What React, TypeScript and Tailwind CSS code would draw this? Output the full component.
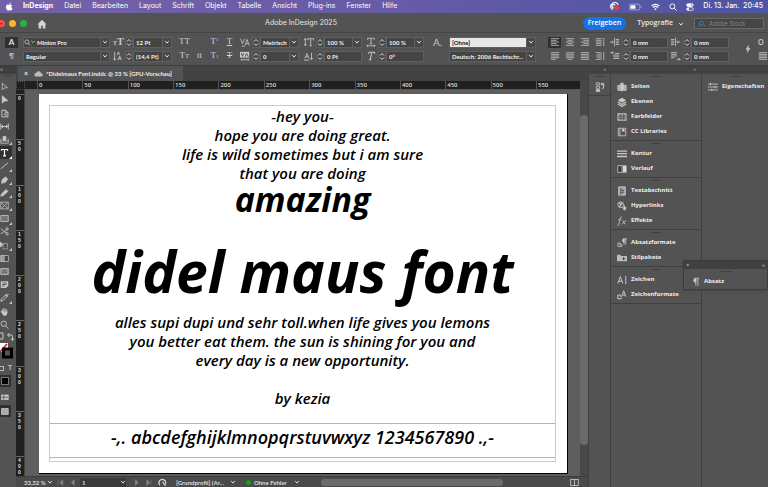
import type { ReactNode } from 'react'

type IconProps = { children: ReactNode; className?: string; box?: string }

function Svg({ children, className = 'size-[10px]', box = '0 0 12 12' }: IconProps) {
  return (
    <svg viewBox={box} className={`${className} shrink-0`} fill="none" stroke="currentColor" strokeWidth="1" aria-hidden="true">
      {children}
    </svg>
  )
}

function Chevron() {
  return (
    <Svg className="size-[6px]" box="0 0 8 8">
      <path d="M1.500 2.500 4 5.500l2.500-3" strokeWidth="1.300" />
    </Svg>
  )
}

function Spinner({ label }: { label: string }) {
  return (
    <button type="button" aria-label={label} className="flex h-[11px] w-2 shrink-0 items-center justify-center border border-[#5d5d5d] bg-[#484848]">
      <Svg className="h-[9px] w-[6px]" box="0 0 6 9">
        <path d="M1 3.500 3 1.500l2 2M1 5.500l2 2 2-2" />
      </Svg>
    </button>
  )
}

type FieldProps = { label: string; value: string; icon?: ReactNode; drop?: boolean; width?: string; light?: boolean }

function Field({ label, value, icon, drop, width = 'w-[38px]', light }: FieldProps) {
  return (
    <div className={`flex h-[11px] shrink-0 border border-[#5f5f5f] ${width} ${light ? 'bg-[#e8e8e8] text-[#222]' : 'bg-[#444] text-[#f0f0f0]'}`}>
      {icon}
      {drop ? (
        <>
          <select aria-label={label} className="min-w-0 flex-1 appearance-none bg-transparent pl-[2px] leading-[9px] outline-none">
            <option>{value}</option>
          </select>
          <span className="pointer-events-none flex w-[9px] items-center justify-center border-l border-[#5f5f5f] bg-[#484848] text-[#ddd]">
            <Chevron />
          </span>
        </>
      ) : (
        <input aria-label={label} defaultValue={value} className="w-full min-w-0 bg-transparent pl-[2px] leading-[9px] outline-none" />
      )}
    </div>
  )
}

type ValueProps = FieldProps & { glyph: ReactNode }

function ValueRow({ glyph, ...field }: ValueProps) {
  return (
    <div className="flex h-[11px] items-center">
      <span className="flex w-3 shrink-0 items-center text-[#c8c8c8]">{glyph}</span>
      <Spinner label={`${field.label} ändern`} />
      <Field {...field} />
    </div>
  )
}

function GlyphButton({ label, children }: { label: string; children: ReactNode }) {
  return (
    <button type="button" aria-label={label} className="flex h-[11px] w-[15px] items-center justify-center font-['Liberation_Serif',serif] text-[9px] font-normal text-[#d0d0d0]">
      {children}
    </button>
  )
}

const lineSets: Record<string, string> = {
  left: 'M1 2h10M1 4h7M1 6h10M1 8h7M1 10h10',
  center: 'M1 2h10M3 4h6M1 6h10M3 8h6M1 10h10',
  right: 'M1 2h10M4 4h7M1 6h10M4 8h7M1 10h10',
  spine: 'M1 2h7M1 4h7M1 6h7M1 8h7M1 10h7M10.500 1v10',
  justLeft: 'M1 2h10M1 4h10M1 6h10M1 8h10M1 10h6',
  justCenter: 'M1 2h10M1 4h10M1 6h10M1 8h10M3 10h6',
  justAll: 'M1 2h10M1 4h10M1 6h10M1 8h10M1 10h10',
  awaySpine: 'M1 2h7M3 4h5M1 6h7M3 8h5M1 10h7M10.500 1v10',
}

function Lines({ d }: { d: string }) {
  return <Svg className="size-[10px]"><path d={d} strokeWidth="1" /></Svg>
}

const menus = ['Datei', 'Bearbeiten', 'Layout', 'Schrift', 'Objekt', 'Tabelle', 'Ansicht', 'Plug-ins', 'Fenster', 'Hilfe']

function MenuBar() {
  return (
    <header className="flex h-[13px] items-center bg-linear-to-r from-[#7462a8] via-[#675ba6] to-[#4c55a4] pr-[5px] pl-[5px] font-[Inter,sans-serif] text-[7px] text-white">
      <Svg className="size-[9px]" box="0 0 24 24">
        <path fill="currentColor" stroke="none" d="M17 12.700c0-2.700 2.200-4 2.300-4.100-1.300-1.800-3.200-2.100-3.900-2.100-1.600-.2-3.200 1-4 1s-2.100-1-3.500-.9c-1.800 0-3.400 1-4.400 2.600-1.900 3.200-.5 8 1.300 10.700.9 1.300 2 2.700 3.400 2.700s1.900-.9 3.500-.9 2.100.9 3.500.8c1.500 0 2.400-1.300 3.300-2.600 1-1.500 1.500-2.900 1.500-3-.1 0-3-1.100-3-4.200zM14.400 4.800c.7-.9 1.200-2.100 1.100-3.300-1.100 0-2.300.7-3.100 1.600-.7.8-1.300 2-1.100 3.200 1.200.1 2.400-.6 3.100-1.500z" />
      </Svg>
      <nav className="ml-[9px] flex gap-[11px]">
        <button type="button" className="font-bold">InDesign</button>
        {menus.map((m) => <button key={m} type="button">{m}</button>)}
      </nav>
      <div className="ml-auto flex items-center gap-[9px]">
        <Svg className="h-[9px] w-[11px]" box="0 0 14 12">
          <path d="M5 10a4 4 0 0 1-1-7.500A4.500 4.500 0 0 1 12 4M6 8a2.300 2.300 0 1 1 2-3.500" strokeWidth="1.500" />
          <circle cx="10" cy="8" r="3.300" fill="#e0432f" stroke="none" />
        </Svg>
        <Svg className="h-[8px] w-[13px]" box="0 0 18 10">
          <rect x=".5" y="1" width="14.500" height="8" rx="2" opacity=".6" />
          <rect x="2" y="2.500" width="7" height="5" rx=".8" fill="currentColor" stroke="none" />
          <path d="M16.500 4v2" opacity=".6" />
        </Svg>
        <Svg className="h-[8px] w-[9px]" box="0 0 14 12">
          <path d="M1 4.500a8.500 8.500 0 0 1 12 0M3.200 7a5.400 5.400 0 0 1 7.600 0" strokeWidth="1.900" />
          <path d="M5.200 9a2.500 2.500 0 0 1 3.600 0L7 11z" fill="currentColor" stroke="none" />
        </Svg>
        <Svg className="size-[8px]"><circle cx="5" cy="5" r="3.700" strokeWidth="1.400" /><path d="m8 8 3.500 3.500" strokeWidth="1.400" /></Svg>
        <Svg className="size-[8px]">
          <rect x="1" y="1" width="10" height="4.200" rx="2.100" fill="currentColor" />
          <rect x="1" y="7" width="10" height="4.200" rx="2.100" />
          <circle cx="3" cy="9.100" r="1.700" fill="currentColor" stroke="none" />
          <circle cx="8.700" cy="3.100" r="1.200" fill="#5356a5" stroke="none" />
        </Svg>
        <time className="font-medium whitespace-pre">Di. 13. Jan.  20:45</time>
      </div>
    </header>
  )
}

function TitleBar() {
  return (
    <div className="grid h-5 grid-cols-[1fr_70px_1fr] items-center border-b border-[#454545] pt-[2px] font-[Inter,sans-serif] text-[7px] text-[#e8e8e8]">
      <div className="flex items-center">
        <span className="flex h-[7px] w-[5px] items-center rounded-r-full bg-[#fb4f4a] text-[5px] text-[#800]">•</span>
        <span className="ml-[4px] size-[7px] rounded-full bg-[#fdb52c]" />
        <span className="ml-[4px] size-[7px] rounded-full bg-[#27b53d]" />
        <button type="button" aria-label="Startseite" className="ml-[10px] text-[#d5d5d5]">
          <Svg className="size-[10px]"><path d="M6 1 .5 6.500H2V11.500h3V8h2v3.500h3V6.500h1.500z" fill="currentColor" stroke="none" /></Svg>
        </button>
      </div>
      <h1 className="-ml-[166px] text-center whitespace-nowrap">Adobe InDesign 2025</h1>
      <div className="flex items-center justify-end pr-1">
        <button type="button" className="h-[13px] rounded-full bg-[#1473e6] px-[5px] font-['Open_Sans',sans-serif] font-semibold text-white">Freigeben</button>
        <button type="button" className="ml-[11px] flex items-center gap-[5px] font-['Open_Sans',sans-serif] font-semibold">
          Typografie <Chevron />
        </button>
        <label className="ml-[10px] flex h-[11px] w-[70px] items-center border border-[#686868] bg-[#464646] pl-[3px] text-[#3b8fe0]">
          <Svg className="size-[8px]"><circle cx="5" cy="5" r="3" /><path d="M3 7 .5 10.500M8 8.500h3.500" /></Svg>
          <input aria-label="Adobe Stock" placeholder="Adobe Stock" className="ml-[3px] w-full min-w-0 bg-transparent text-[6px] placeholder:text-[#858585]" />
        </label>
      </div>
    </div>
  )
}

function Rows({ children, className = '' }: { children: ReactNode; className?: string }) {
  return <div className={`flex shrink-0 flex-col gap-[3px] ${className}`}>{children}</div>
}

function SerifT({ children }: { children: ReactNode }) {
  return <span className="font-['Liberation_Serif',serif] text-[10px] leading-none font-bold whitespace-nowrap">{children}</span>
}

function ControlBar() {
  return (
    <section aria-label="Steuerung" className="flex h-[33px] items-center overflow-hidden border-b border-[#3c3c3c] pl-[5px] font-[Lato,sans-serif] text-[6px] font-bold">
      <Rows className="w-[18px]">
        <button type="button" aria-label="Zeichenformatierung" className="h-[11px] w-[13px] bg-[#303030] text-[8px] leading-[11px]">A</button>
        <button type="button" aria-label="Absatzformatierung" className="h-[11px] w-[13px] text-[7px] leading-[11px] text-[#bbb]">¶</button>
      </Rows>
      <Rows>
        <Field
          label="Schriftfamilie" value="Minion Pro" drop width="w-[87px]"
          icon={<span className="flex items-center"><Svg className="size-[7px]"><circle cx="5" cy="5" r="3.500" /><path d="m7.500 7.500 3 3.500" /></Svg><Svg className="size-[4px]"><path d="m1 3 5 5 5-5" strokeWidth="2" /></Svg></span>}
        />
        <Field label="Schriftschnitt" value="Regular" drop width="w-[87px]" />
      </Rows>
      <Rows className="ml-[3px]">
        <ValueRow label="Schriftgrad" value="12 Pt" drop width="w-[39px]" glyph={<SerifT><span className="text-[6px]">T</span>T</SerifT>} />
        <ValueRow label="Zeilenabstand" value="(14,4 Pt)" drop width="w-[39px]" glyph={<Svg><path d="M2 1v10M.5 9 2 11l1.500-2M5 5l1.500-4L8 5M6 11l2-5 2 5M6.500 9h3" /></Svg>} />
      </Rows>
      <Rows className="ml-[5px]">
        <div className="flex">
          <GlyphButton label="Großbuchstaben">TT</GlyphButton><span className="w-[15px]" />
          <GlyphButton label="Hochgestellt">T<sup className="text-[5px]">1</sup></GlyphButton>
          <GlyphButton label="Unterstrichen"><span className="underline">T</span></GlyphButton>
        </div>
        <div className="flex">
          <GlyphButton label="Kapitälchen">T<span className="text-[7px]">T</span></GlyphButton>
          <GlyphButton label="Ligaturen">tt</GlyphButton>
          <GlyphButton label="Tiefgestellt">T<sub className="text-[5px]">1</sub></GlyphButton>
          <GlyphButton label="Durchgestrichen"><span className="line-through">T</span></GlyphButton>
        </div>
      </Rows>
      <Rows className="ml-[3px]">
        <ValueRow label="Kerning" value="Metrisch" drop width="w-[39px]" glyph={<Svg><path d="m.5 2 2.500 6L5.500 2M6 10l2.500-7L11 10M7 8h3M2 11h4" /></Svg>} />
        <ValueRow label="Laufweite" value="0" drop width="w-[39px]" glyph={<Svg><rect x="0" y="1" width="11" height="7" fill="currentColor" stroke="none" /><path d="m1.500 2.500 1.500 4 1.500-4M6 7l2-4 2 4" stroke="#444" /><path d="M1 10.500h10M2 9.500v2M10 9.500v2" /></Svg>} />
      </Rows>
      <Rows className="ml-[5px]">
        <ValueRow label="Vertikal skalieren" value="100 %" drop glyph={<Svg><path d="M1.500 2v8M0 3.500 1.500 1.500 3 3.500M0 8.500l1.500 2 1.500-2M4.500 4V2h7v2M8 2v8.500M6.500 10.500h3" /></Svg>} />
        <ValueRow label="Grundlinienversatz" value="0 Pt" glyph={<Svg><path d="M1 9l2.500-6L6 9M2 7h3M0 11h6M9 2v8M7.500 8.500 9 10.500l1.500-2" /></Svg>} />
      </Rows>
      <Rows className="ml-[4px]">
        <ValueRow label="Horizontal skalieren" value="100 %" drop glyph={<Svg><path d="M2 3.500v-2h8v2M6 1.500V8M4.500 8h3M1 10.500h10M2.500 9.500 1 10.500l1.500 1M9.500 9.500l1.500 1-1.500 1" /></Svg>} />
        <ValueRow label="Neigen" value="0°" glyph={<Svg><path d="M3 3.500 3.500 1.500h7L10 3.500M7 1.500 5 10.500M3.500 10.500h3" strokeWidth="1.200" /></Svg>} />
      </Rows>
      <Rows className="ml-[9px] w-[16px] text-[#c8c8c8]">
        <span className="h-[11px] text-[10px] leading-[11px] font-normal">A.</span>
        <span className="h-[11px]" />
      </Rows>
      <Rows>
        <Field label="Zeichenformat" value="[Ohne]" drop light width="w-[87px]" />
        <Field label="Sprache" value="Deutsch: 2006 Rechtschr..." drop width="w-[87px]" />
      </Rows>
      <div className="ml-[12px] grid shrink-0 grid-cols-4 gap-x-[2px] gap-y-[3px] text-[#bdbdbd]">
        {Object.entries(lineSets).map(([name, d], i) => (
          <button key={name} type="button" aria-label={name} className={`flex h-[11px] w-[13px] items-center justify-center ${i === 0 ? 'bg-[#303030]' : ''}`}>
            <Lines d={d} />
          </button>
        ))}
      </div>
      <Rows className="ml-[4px]">
        <ValueRow label="Einzug links" value="0 mm" glyph={<Svg><path d="M0 6h4M2.500 4.500 4 6 2.500 7.500M5.500 1v10M7 3h4M7 5h4M7 7h4M7 9h4" /></Svg>} />
        <ValueRow label="Einzug erste Zeile" value="0 mm" glyph={<Svg><path d="M0 2h4M2.500.5 4 2 2.500 3.500M6 3h5M4 5h7M4 7h7M4 9h7" /></Svg>} />
      </Rows>
      <Rows className="ml-[3px]">
        <ValueRow label="Einzug rechts" value="0 mm" glyph={<Svg><path d="M0 3h4M0 5h4M0 7h4M0 9h4M5.500 1v10M11 6H7M8.500 4.500 7 6l1.500 1.500" /></Svg>} />
        <ValueRow label="Einzug letzte Zeile" value="0 mm" glyph={<Svg><path d="M0 2h7M0 4h7M0 6h7M0 8h4M7 10h4M9.500 8.500 11 10l-1.500 1.500" /></Svg>} />
      </Rows>
      <button type="button" aria-label="Schnellaktionen" className="ml-[14px] text-[#ccc]">
        <Svg className="size-[10px]"><path d="M7 1 3 6.500h2.500L4.500 11 9 5H6.500z" fill="currentColor" stroke="none" /></Svg>
      </button>
      <Rows className="ml-[5px] w-[10px] text-[#c8c8c8]">
        <span className="flex h-[11px] items-center text-[7px]">O</span>
        <span className="flex h-[11px] items-center"><Lines d={lineSets.justAll} /></span>
      </Rows>
    </section>
  )
}

const tools: { name: string; art: ReactNode }[] = [
  { name: 'Auswahl', art: <path d="M3 1.500v9l2.500-2.500L10 7.500z" /> },
  { name: 'Direktauswahl', art: <path d="M3 1v10l3-3 4.500-.5z" fill="currentColor" /> },
  { name: 'Seite', art: <path d="M2.500 1.500h5l3 3v6h-8zM7 1.500V5h3.500M5 7h3v3" strokeWidth="1.300" /> },
  { name: 'Lücke', art: <path d="M1 2v8M11 2v8M2 6h8M4 4 2 6l2 2M8 4l2 2-2 2" strokeWidth="1.300" /> },
  { name: 'Inhaltsaufnahme', art: <><path d="M1 5v6h10V5M1 8h10" /><path d="M4 2h4v5H4z" fill="currentColor" /></> },
  { name: 'Text', art: <path d="M2 3.500V2h8v1.500M6 2v8.500M4 10.500h4" strokeWidth="1.600" /> },
  { name: 'Linie', art: <path d="M1 10.500 11 2" strokeWidth="1.300" /> },
  { name: 'Zeichenstift', art: <path d="m2 11 1-5 4-3 3 3-3 4zM7.500 2l3 3" fill="currentColor" /> },
  { name: 'Buntstift', art: <path d="m1 11 1-3 6-6 2.500 2.500-6 5.500z" fill="currentColor" /> },
  { name: 'Rechteckrahmen', art: <path d="M1 1.500h10v9H1zM1 1.500l10 9M11 1.500l-10 9" /> },
  { name: 'Rechteck', art: <path d="M1 2h10v8H1z" fill="#777" /> },
  { name: 'Schere', art: <path d="m1 2 7 6M1 9l8-5M8 2.500a1.500 1.500 0 1 1 3 0 1.500 1.500 0 0 1-3 0M8 9a1.500 1.500 0 1 1 3 0 1.500 1.500 0 0 1-3 0" strokeWidth="1.200" /> },
  { name: 'Frei transformieren', art: <><path d="M4 3.500h6v7H4z" strokeDasharray="2 1" /><path d="M0 1v7l4-3z" fill="currentColor" /></> },
  { name: 'Verlaufsfarbfeld', art: <><path d="M1 2h10v8H1z" fill="#999" /><path d="M6.500 2.500h4v7h-4z" fill="#444" stroke="none" /></> },
  { name: 'Weiche Verlaufskante', art: <><path d="M1 2h10v8H1z" fill="#888" /><path d="M3 7h2M7 7h2M5 4.500h2" stroke="#333" /></> },
  { name: 'Notiz', art: <><path d="M1 1.500h10v6l-3 3H1z" fill="currentColor" stroke="none" /><path d="M3 4h6M3 6h6M3 8h3" stroke="#444" /></> },
  { name: 'Pipette', art: <path d="m1 11 1-3 5-5 2 2-5 5zM7 2l3 3M8 3l2-2 1 1-2 2" strokeWidth="1.300" /> },
  { name: 'Hand', art: <path d="M3 6V3M5 6V1.500M7 6V2M9 7V3.500M3 6l-1.500 0L5 11h3l1.500-4z" fill="currentColor" strokeWidth="1.300" /> },
  { name: 'Zoom', art: <path d="M1.500 5a3.500 3.500 0 1 0 7 0 3.500 3.500 0 0 0-7 0M7.500 7.500l3.500 4" strokeWidth="1.200" /> },
]

// kleines Dreieck für Werkzeuge mit Untermenü
function Corner() {
  return <Svg className="mt-[9px] size-[3px]"><path d="M12 0v12H0z" fill="currentColor" stroke="none" /></Svg>
}

function Toolbox() {
  return (
    <aside aria-label="Werkzeuge" className="flex w-4 shrink-0 flex-col text-[#c8c8c8]">
      <div className="h-2 bg-[#3f3f3f] text-[6px] leading-[6px]">»</div>
      <div className="mx-auto mt-px mb-[4px] h-px w-[10px] bg-[#3e3e3e]" />
      <div className="flex h-[251px] flex-col">
        {tools.map(({ name, art }, i) => (
          <button key={name} type="button" aria-label={name} className={`flex min-h-0 w-3 flex-1 items-center ${name === 'Text' ? 'bg-[#303030] text-white' : ''}`}>
            <Svg className="size-[9px]">{art}</Svg>
            {((i > 3 && i < 13 && i !== 11) || i === 16) && <Corner />}
          </button>
        ))}
      </div>
      <Svg className="mt-px h-[9px] w-[14px]" box="0 0 14 9">
        <path d="M0 1h3v6H0M8 3h3a1.500 1.500 0 0 1 1.500 1.500V8M9.500 1 7.500 3l2 2M11 6.500 12.500 8.500 14 6.500" />
      </Svg>
      <Svg className="h-[18px] w-[14px]" box="0 0 14 18">
        <rect x="0" y="2" width="8" height="9" fill="#fff" stroke="none" />
        <path d="M0 11 7 3" stroke="#e0202a" strokeWidth="1.800" />
        <rect x="3.500" y="8" width="8" height="8" fill="#555" stroke="#000" strokeWidth="3" />
      </Svg>
      <div className="mt-[3px] flex h-[13px] items-center gap-1 text-[7px] font-semibold"><span className="h-[5px] w-[4px] border border-l-0 border-[#bbb]" />T</div>
      <button type="button" aria-label="Farbe anwenden" className="flex h-3 w-[11px] items-center bg-[#303030]"><span className="ml-px size-2 border border-[#777] bg-black" /></button>
      <button type="button" aria-label="Ansichtsoptionen" className="mt-[3px] flex h-3 items-center"><Svg className="size-[9px]"><path d="M2 4h9v6H2z" fill="currentColor" /><path d="M2 7h9M5 4v6" stroke="#444" /></Svg></button>
      <button type="button" aria-label="Bildschirmmodus" className="mt-[3px] flex h-3 w-[11px] items-center bg-[#303030]"><Svg className="size-[9px]"><path d="M2 2h9v8H2z" fill="#aaa" /></Svg></button>
    </aside>
  )
}

const hMarks = ['0', '50', '100', '150', '200', '250', '300', '350', '400', '450', '500']
const vMarks = ['0', '50', '100', '150', '200', '250', '300', '350']

function VMark({ mark }: { mark: string }) {
  return (
    <div className="flex flex-col border-t border-[#666] pl-[2px]">
      {mark.split('').map((c, i) => <span key={i} className="h-[6px] leading-[6px]">{c}</span>)}
    </div>
  )
}

const script = "font-['Open_Sans',sans-serif] font-semibold italic"

function DocumentPage() {
  return (
    <article className={`flex flex-1 flex-col border-r border-b border-black bg-white pt-[11px] pr-[11px] pb-[11px] pl-[10px] text-center whitespace-nowrap text-black ${script}`}>
      <div className="flex flex-1 flex-col border border-[#e6b8e8]">
        <p className="mt-px text-[15px] leading-[19px]">
          -hey you-<br />hope you are doing great.<br />life is wild sometimes but i am sure<br />that you are doing
        </p>
        <p className="text-[34px] leading-[32px] font-bold">amazing</p>
        <h2 className="mt-[24px] text-[57px] leading-[64px] font-bold">didel maus font</h2>
        <p className="mt-[10px] text-[15px] leading-[19px]">
          alles supi dupi und sehr toll.when life gives you lemons<br />you better eat them. the sun is shining for you and<br />every day is a new opportunity.
        </p>
        <p className="mt-[19px] text-[15px] leading-[19px]">by kezia</p>
        <p className="mt-auto mb-[3px] h-[35px] border-y border-[#8cc0e0] text-[18px] leading-[27px]">-,. abcdefghijklmnopqrstuvwxyz 1234567890 .,-</p>
      </div>
    </article>
  )
}

function StatusBar() {
  return (
    <footer className="flex h-[11px] shrink-0 items-center border-t border-[#3c3c3c] bg-[#4a4a4a] pl-[8px] font-[Lato,sans-serif] text-[6px] font-bold text-[#ddd]">
      <button type="button" className="flex w-[29px] items-center justify-between">33,32 % <Chevron /></button>
      <div className="ml-[4px] flex gap-[5px] text-[#858585]">
        <Svg className="size-[7px]"><path d="M2 1v10" /><path d="M10 1 5 6l5 5z" fill="currentColor" /></Svg>
        <Svg className="size-[7px]"><path d="M9 1 4 6l5 5z" fill="currentColor" /></Svg>
      </div>
      <div className="ml-[4px] flex h-[9px] w-[46px] items-center bg-[#3a3a3a]">
        <input aria-label="Seite" defaultValue="1" className="w-full min-w-0 bg-transparent pl-[2px]" />
        <Chevron />
      </div>
      <div className="ml-[7px] flex gap-[5px] text-[#858585]">
        <Svg className="size-[7px]"><path d="m4 1 5 5-5 5z" fill="currentColor" /></Svg>
        <Svg className="size-[7px]"><path d="m3 1 5 5-5 5z" fill="currentColor" /><path d="M10 1v10" /></Svg>
      </div>
      <Svg className="ml-[6px] size-[9px]"><path d="M2.500 9.500A4.500 4.500 0 1 1 10 8M6 5l4 5.500" strokeWidth="1.600" /></Svg>
      <button type="button" className="ml-[9px] flex items-center gap-[6px] whitespace-nowrap">[Grundprofil] (Ar... <Chevron /></button>
      <button type="button" className="ml-[10px] flex items-center gap-[3px] whitespace-nowrap">
        <span className="size-[5px] rounded-full bg-[#11a312]" />Ohne Fehler <span className="ml-1"><Chevron /></span>
      </button>
      <div className="ml-[21px] h-[7px] min-w-0 flex-1 rounded-full bg-[#6b6b6b]" />
      <Svg className="mr-[9px] ml-[67px] size-[9px]"><rect x="1" y="2" width="10" height="8" /><path d="M6 2v8" /></Svg>
    </footer>
  )
}

function Workspace() {
  return (
    <main className="flex min-w-0 flex-1 flex-col">
      <div className="flex h-[15px] shrink-0 bg-[#434343] pl-[2px]">
        <div className="flex w-[165px] items-center bg-[#535353] pl-[6px] font-[Lato,sans-serif] text-[6px] font-bold whitespace-nowrap text-[#eee]">
          <button type="button" aria-label="Dokument schließen" className="text-[7px]">×</button>
          <Svg className="mr-[3px] ml-[6px] h-[7px] w-[9px]" box="0 0 12 9"><path d="M3 8.500a2.500 2.500 0 0 1 0-5 3.500 3.500 0 0 1 6.500.5 2.200 2.200 0 0 1 0 4.500z" fill="#bbb" stroke="none" /></Svg>
          *Didelmaus Font.inddc @ 33 % [GPU-Vorschau]
        </div>
      </div>
      <div className="flex min-h-0 flex-1">
        <div className="flex min-w-0 flex-1 flex-col">
          <div className="flex h-[9px] bg-[#202020] text-[6px] leading-[8px] font-semibold text-[#ddd]">
            <span className="w-[9px] border border-dotted border-[#555]" />
            <span className="w-[12px] border-b border-[#555]" />
            {hMarks.map((m) => <span key={m} className="flex-1 border-b border-l border-[#555] pl-px">{m}</span>)}
            <span className="w-[44px] border-b border-l border-[#555] pl-px">550</span>
          </div>
          <div className="flex flex-1">
            <div className="flex w-[9px] flex-col border-r border-[#444] bg-[#202020] pt-[4px] font-['Liberation_Sans',sans-serif] text-[5px] font-bold text-[#ddd]">
              <div className="grid flex-1 auto-rows-fr">
                {vMarks.map((m) => <VMark key={m} mark={m} />)}
              </div>
              <div className="h-[20px]"><VMark mark="400" /></div>
            </div>
            <div className="flex flex-1 bg-[#5e5e5e] pt-[4px] pr-[12px] pb-[2px] pl-[14px]">
              <DocumentPage />
            </div>
          </div>
        </div>
        <div className="flex w-2 flex-col bg-[#484848]">
          <div className="mt-[34px] mb-[31px] flex-1 rounded-full bg-[#6b6b6b]" />
        </div>
      </div>
      <StatusBar />
    </main>
  )
}

type PanelItem = { name: string; art: ReactNode }

const groups: PanelItem[][] = [
  [
    { name: 'Seiten', art: <><path d="M1 4h3v6H1zM8 4h3v6H8z" fill="#aaa" /><path d="M4.500 1.500h3v9h-3z" fill="currentColor" /></> },
    { name: 'Ebenen', art: <><path d="M6 1 1 4l5 3 5-3z" fill="currentColor" stroke="none" /><path d="m1 6 5 3 5-3M1 8.500l5 3 5-3" strokeWidth="1.300" /></> },
    { name: 'Farbfelder', art: <><path d="M1 2h10v8H1z" fill="#999" /><path d="M1 5h10M1 7.500h10M4.500 2v8M8 2v8" stroke="#555" /></> },
    { name: 'CC Libraries', art: <><path d="M1.500 1.500h9v9h-9zM3.500 1.500v9" /><path d="M6 2h3v4L7.500 5 6 6z" fill="currentColor" stroke="none" /></> },
  ],
  [
    { name: 'Kontur', art: <path d="M0 2.500h12M0 5.500h12M0 9h12" strokeWidth="1.600" /> },
    { name: 'Verlauf', art: <><path d="M1 2h10v8H1z" fill="#333" /><path d="M7 2.500h4v7H7z" fill="#ddd" stroke="none" /><path d="M5 2.500h2v7H5z" fill="#888" stroke="none" /></> },
  ],
  [
    { name: 'Textabschnitt', art: <><path d="M2 1h8v10H2z" fill="#aaa" /><path d="M3.500 3.500h3M3.500 5.500h5M3.500 7.500h5M3.500 9.500h3" stroke="#444" /></> },
    { name: 'Hyperlinks', art: <><circle cx="4.500" cy="4.500" r="3.500" /><path d="M2 2l3 2-2 3M6 1.500 5.500 4" strokeWidth="1.500" /><path d="M6.500 8h5M9 5.500v5.500M9 11 7.500 9M9 11l1.500-2" strokeWidth="1.300" /></> },
    { name: 'Effekte', art: <path d="M6 1.500c-1.500-.7-2.200.3-2.500 1.800L2.300 9.500C2 11 1.300 11.600.3 11.200M1.800 4.500h3.500M6.500 5.200c1.500 0 1.500 5 4 4.500M11 5.200c-1.500 0-3.500 4.600-5.200 4.500" /> },
  ],
  [
    { name: 'Absatzformate', art: <><path d="M8 1h4M8.500 1v7M10.500 1v7" /><path d="M8.500 1a2 2 0 0 0 0 4z" fill="currentColor" /><path d="M1 6h3v2M1 6v4h5V8H3" /></> },
    { name: 'Stilpakete', art: <><path d="M0 2h4l1 1.500h7V10H0z" fill="#bbb" stroke="none" /><path d="M8 5v3.500M6.500 7H9.500" stroke="#333" /></> },
  ],
  [
    { name: 'Zeichen', art: <path d="m1 10 3-8 3 8M2 7.500h4M10.500 1v10" strokeWidth="1.200" /> },
    { name: 'Zeichenformate', art: <path d="m5.500 8 2.500-7 2.500 7M6.500 6h3M1 6h3v2M1 6v4.500h4V9" strokeWidth="1.200" /> },
  ],
]

function Grip() {
  return <div className="flex h-[5px] items-center justify-center"><span className="h-px w-[10px] bg-[#404040]" /></div>
}

function PanelButton({ name, art }: PanelItem) {
  return (
    <button type="button" className="flex h-[15px] w-full items-center gap-1 pl-[6px] font-['Open_Sans',sans-serif] text-[6px] font-bold whitespace-nowrap text-[#eee]">
      <Svg className="size-[10px] text-[#c8c8c8]">{art}</Svg>
      {name}
    </button>
  )
}

function Docks() {
  return (
    <>
      <aside className="flex w-[22px] shrink-0 flex-col border-l border-[#404040]">
        <div className="h-[8px] bg-[#424242] pr-[4px] text-right text-[5px] leading-[6px] text-[#bbb]">«</div>
        <div className="flex h-[22px] flex-col border-b border-[#404040]">
          <Grip />
          <button type="button" aria-label="Historie" className="flex flex-1 items-center justify-center text-[#c2c2c2]">
            <Svg className="size-[10px]"><path d="M1.500 1h4v2.500h-4zM1.500 5h4v2.500h-4z" /><path d="M1.500 9h4v2.500h-4z" fill="currentColor" /><path d="M7.500 2.500h3V5a3 3 0 0 1-2 3M9 1 7.500 2.500 9 4" strokeWidth="1.300" /></Svg>
          </button>
        </div>
      </aside>
      <aside className="w-[91px] shrink-0 border-l border-[#404040]">
        <div className="h-[8px] bg-[#424242] pr-[5px] text-right text-[5px] leading-[6px] text-[#bbb]">«</div>
        {groups.map((items) => (
          <div key={items[0].name} className="border-b border-[#404040] pb-px">
            <Grip />
            {items.map((p) => <PanelButton key={p.name} {...p} />)}
          </div>
        ))}
      </aside>
      <aside className="w-[67px] shrink-0 border-l border-[#404040]">
        <div className="h-[8px] bg-[#424242]" />
        <Grip />
        <PanelButton name="Eigenschaften" art={<path d="M0 2.500h12M0 6h12M0 9.500h12M3 1v3M8.500 4.500v3M4.500 8v3" />} />
      </aside>
    </>
  )
}

// frei schwebendes Bedienfeld über den Docks
function FloatingPanel() {
  return (
    <div className="absolute top-[260px] right-0 w-[85px] border border-[#3c3c3c] bg-[#535353] shadow">
      <div className="flex h-[8px] items-center justify-between bg-[#404040] px-[2px] text-[6px] leading-none text-[#ccc]">
        <button type="button" aria-label="Bedienfeld schließen">×</button><span>«</span>
      </div>
      <Grip />
      <PanelButton name="Absatz" art={<><path d="M6 1.500h5M7 1.500v9M9.500 1.500v9" /><path d="M7 1.500a2.500 2.500 0 0 0 0 5z" fill="currentColor" /></>} />
    </div>
  )
}

export default function App() {
  return (
    <div className="relative flex min-h-screen flex-col overflow-hidden bg-[#535353] font-['Open_Sans',sans-serif] text-[#e4e4e4]">
      <MenuBar />
      <TitleBar />
      <ControlBar />
      <div className="flex flex-1">
        <Toolbox />
        <Workspace />
        <Docks />
      </div>
      <FloatingPanel />
    </div>
  )
}
